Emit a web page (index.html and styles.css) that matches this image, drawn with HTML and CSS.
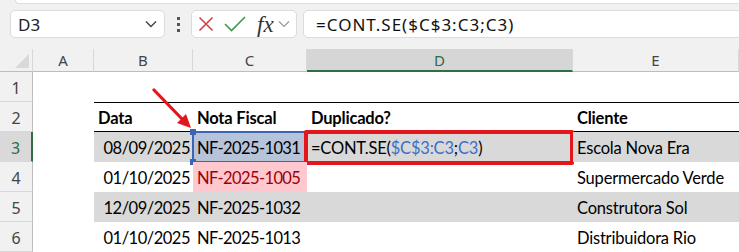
FILE: index.html
```html
<!DOCTYPE html>
<html lang="pt">
<head>
  <meta charset="UTF-8" />
  <title>CONT.SE duplicados</title>
  <link rel="stylesheet" href="styles.css">
</head>
<body>
  <div class="top-strip"></div>

  <!-- barra de fórmulas -->
  <div class="formula-bar">
    <div class="name-box">
      <span>D3</span>
      <svg class="chev" width="12" height="8" viewBox="0 0 12 8"><path d="M1 1.5 L6 6.5 L11 1.5" fill="none" stroke="#444" stroke-width="1.4"/></svg>
    </div>
    <div class="dots"><i></i><i></i><i></i></div>
    <div class="fn-box">
      <svg width="16" height="16" viewBox="0 0 16 16"><path d="M1.5 1.5 L14.5 14.5 M14.5 1.5 L1.5 14.5" stroke="#d2434a" stroke-width="1.6" fill="none"/></svg>
      <svg width="22" height="16" viewBox="0 0 22 16"><path d="M1 8 L7.5 14.5 L21 1" stroke="#3f9a4f" stroke-width="1.6" fill="none"/></svg>
      <span class="fx">fx</span>
      <svg class="chev-sm" width="12" height="8" viewBox="0 0 12 8"><path d="M1 1.5 L6 6.5 L11 1.5" fill="none" stroke="#9a9a9a" stroke-width="1.2"/></svg>
    </div>
    <div class="formula-input">=CONT.SE($C$3:C3;C3)</div>
  </div>

  <!-- planilha -->
  <div class="sheet">
    <div class="hd corner"><span class="tri"></span></div>
    <div class="hd col">A</div>
    <div class="hd col">B</div>
    <div class="hd col">C</div>
    <div class="hd col sel">D</div>
    <div class="hd col">E</div>

    <div class="hd row">1</div>
    <div class="c"></div><div class="c"></div><div class="c"></div><div class="c"></div><div class="c"></div>

    <div class="hd row">2</div>
    <div class="c"></div>
    <div class="c th">Data</div>
    <div class="c th">Nota Fiscal</div>
    <div class="c th">Duplicado?</div>
    <div class="c th">Cliente</div>

    <div class="hd row sel">3</div>
    <div class="c"></div>
    <div class="c band num">08/09/2025</div>
    <div class="c band code ref">NF-2025-1031<span class="h h-t"></span><span class="h h-b"></span></div>
    <div class="c band active">=CONT.SE(<span class="blue">$C$3:C3</span>;<span class="blue">C3</span>)<span class="mark"></span></div>
    <div class="c band">Escola Nova Era</div>

    <div class="hd row">4</div>
    <div class="c"></div>
    <div class="c num">01/10/2025</div>
    <div class="c code dup">NF-2025-1005</div>
    <div class="c"></div>
    <div class="c">Supermercado Verde</div>

    <div class="hd row">5</div>
    <div class="c"></div>
    <div class="c band num">12/09/2025</div>
    <div class="c band code">NF-2025-1032</div>
    <div class="c band"></div>
    <div class="c band">Construtora Sol</div>

    <div class="hd row">6</div>
    <div class="c"></div>
    <div class="c num">01/10/2025</div>
    <div class="c code">NF-2025-1013</div>
    <div class="c"></div>
    <div class="c">Distribuidora Rio</div>

    <svg class="arrow" width="50" height="50" viewBox="0 0 50 50">
      <path d="M3 2 L32 32" stroke="#e3161b" stroke-width="3.2" stroke-linecap="round"/>
      <path d="M40 40 L26 35 L35 26 Z" fill="#e3161b"/>
    </svg>
  </div>
</body>
</html>
```

FILE: styles.css
```css
* {
  margin: 0;
  padding: 0;
  box-sizing: border-box;
}
body {
  background: #f1f1f1;
  width: 739px;
  height: 252px;
  overflow: hidden;
  font-family: 'Noto Sans', sans-serif;
  color: #000;
}
.top-strip {
  height: 4px;
  margin-left: 15px;
  background: #fff;
  border-bottom: 1px solid #dedede;
  border-left: 1px solid #dedede;
  border-bottom-left-radius: 6px;
}
.formula-bar {
  display: flex;
  align-items: center;
  height: 45px;
  padding: 4px 0 9px 10px;
}
.name-box, .fn-box, .formula-input {
  height: 28px;
  background: #fff;
  border: 1px solid #dcdcdc;
  border-radius: 5px;
  display: flex;
  align-items: center;
}
.name-box {
  width: 155px;
  padding: 0 7px;
  justify-content: space-between;
  font-size: 17px;
  color: #222;
}
.dots {
  width: 26px;
  display: flex;
  flex-direction: column;
  align-items: center;
  gap: 3px;
}
.dots i {
  width: 3px;
  height: 3px;
  background: #555;
}
.fn-box {
  width: 106px;
  padding: 0 0 0 6px;
  gap: 10px;
}
.fx {
  font-family: 'Liberation Serif', serif;
  font-style: italic;
  font-size: 23px;
  color: #333;
  margin-left: 1px;
  margin-right: -6px;
  line-height: 1;
}
.formula-input {
  flex: 1;
  margin-left: 6px;
  margin-right: -6px;
  padding-left: 12px;
  font-size: 17px;
  letter-spacing: 1px;
  color: #111;
}

.sheet {
  position: relative;
  display: grid;
  grid-template-columns: 33px 61px 99px 114px 266px 166px;
  grid-template-rows: 23px repeat(6, 30px);
  font-family: Lato, sans-serif;
  font-size: 16.5px;
  background: #fff;
}
.hd {
  background: #f1f1f1;
  color: #444;
  font-family: 'Noto Sans', sans-serif;
  display: flex;
  align-items: center;
  justify-content: center;
}
.hd.col {
  font-size: 15px;
  border-right: 1px solid #d8d8d8;
  border-bottom: 1px solid #bdbdbd;
}
.hd.col.sel {
  background: #d6d6d6;
  color: #2e6b45;
  border-bottom: 2px solid #2e7040;
}
.hd.row {
  font-size: 16px;
  padding-top: 3px;
  border-right: 1px solid #bdbdbd;
  border-bottom: 1px solid #d8d8d8;
}
.hd.row.sel {
  background: #d9d9d9;
  color: #2e6b45;
  border-right: 2px solid #2e7040;
}
.corner {
  border-right: 1px solid #d8d8d8;
  border-bottom: 1px solid #bdbdbd;
  justify-content: flex-end;
  align-items: flex-end;
  padding: 0 3px 3px 0;
}
.tri {
  width: 0;
  height: 0;
  border-left: 14px solid transparent;
  border-bottom: 14px solid #d9d9d9;
}
.c {
  position: relative;
  display: flex;
  align-items: center;
  padding: 2px 0 0 4px;
  white-space: nowrap;
  letter-spacing: -0.2px;
}
.th {
  font-weight: 700;
  border-top: 1px solid #000;
  border-bottom: 1px solid #000;
}
.band {
  background: #d9d9d9;
}
.num {
  justify-content: flex-end;
  padding: 2px 3px 0 0;
  letter-spacing: -0.5px;
}
.code {
  letter-spacing: -0.6px;
}
.dup {
  background: #ffc7ce;
  color: #9c0006;
}
.blue {
  color: #3d6fc8;
}
.ref {
  background: #b7c3d8;
  outline: 2px solid #3c64b4;
  outline-offset: -1px;
}
.h {
  position: absolute;
  left: -3px;
  width: 6px;
  height: 6px;
  background: #3c64b4;
}
.h-t { top: -3px; }
.h-b { bottom: -3px; }
.mark {
  position: absolute;
  left: -3px;
  top: -2px;
  right: -1px;
  bottom: -3px;
  border: 4px solid #e3161b;
  border-radius: 2px;
}
.arrow {
  position: absolute;
  left: 151px;
  top: 39px;
}
```
